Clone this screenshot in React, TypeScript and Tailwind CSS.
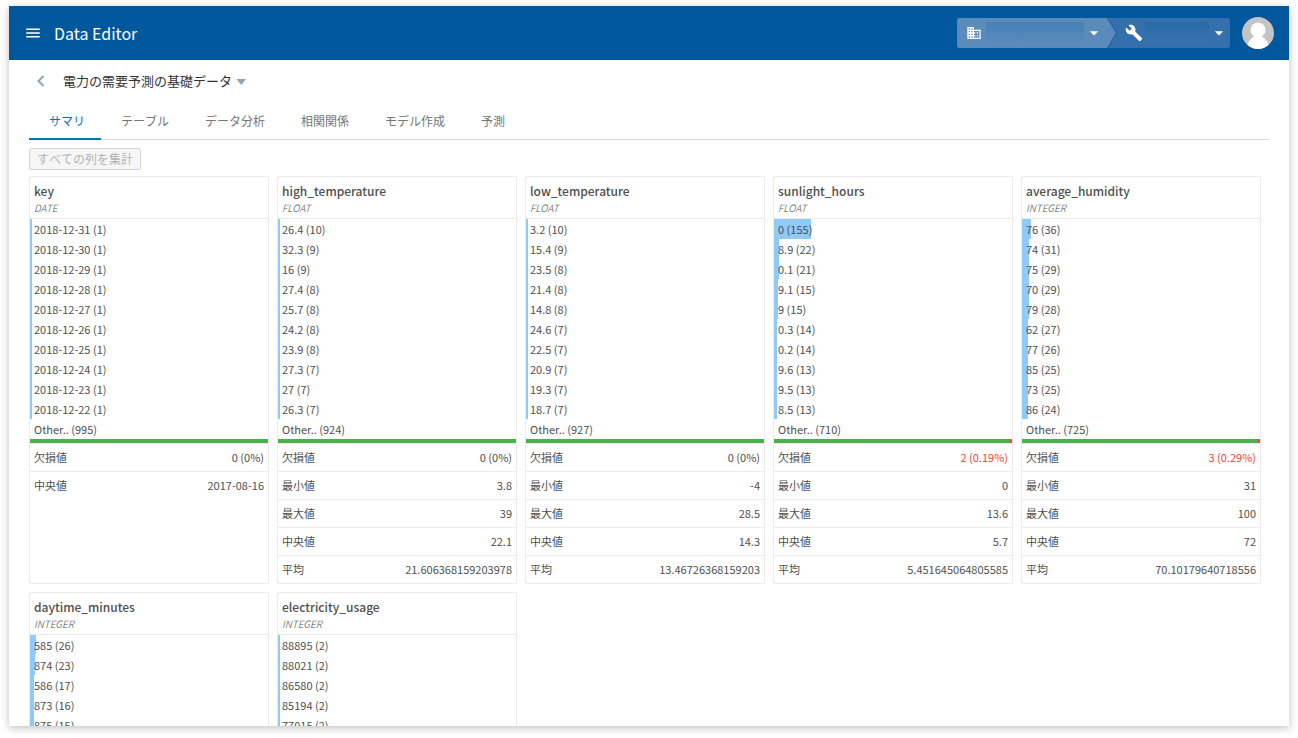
import { useState } from "react";
import { MdArrowDropDown, MdBuild, MdBusiness, MdMenu } from "react-icons/md";

type Column = {
  name: string;
  type: "DATE" | "FLOAT" | "INTEGER";
  values: [string, number][];
  summary?: {
    other: number;
    missing: number;
    missingRate: string;
    stats: [string, string][];
  };
};

const TABS = ["サマリ", "テーブル", "データ分析", "相関関係", "モデル作成", "予測"];

const TOTAL = 1005;

const COLUMNS: Column[] = [
  {
    name: "key",
    type: "DATE",
    values: [
      ["2018-12-31", 1],
      ["2018-12-30", 1],
      ["2018-12-29", 1],
      ["2018-12-28", 1],
      ["2018-12-27", 1],
      ["2018-12-26", 1],
      ["2018-12-25", 1],
      ["2018-12-24", 1],
      ["2018-12-23", 1],
      ["2018-12-22", 1],
    ],
    summary: {
      other: 995,
      missing: 0,
      missingRate: "0%",
      stats: [["中央値", "2017-08-16"]],
    },
  },
  {
    name: "high_temperature",
    type: "FLOAT",
    values: [
      ["26.4", 10],
      ["32.3", 9],
      ["16", 9],
      ["27.4", 8],
      ["25.7", 8],
      ["24.2", 8],
      ["23.9", 8],
      ["27.3", 7],
      ["27", 7],
      ["26.3", 7],
    ],
    summary: {
      other: 924,
      missing: 0,
      missingRate: "0%",
      stats: [
        ["最小値", "3.8"],
        ["最大値", "39"],
        ["中央値", "22.1"],
        ["平均", "21.606368159203978"],
      ],
    },
  },
  {
    name: "low_temperature",
    type: "FLOAT",
    values: [
      ["3.2", 10],
      ["15.4", 9],
      ["23.5", 8],
      ["21.4", 8],
      ["14.8", 8],
      ["24.6", 7],
      ["22.5", 7],
      ["20.9", 7],
      ["19.3", 7],
      ["18.7", 7],
    ],
    summary: {
      other: 927,
      missing: 0,
      missingRate: "0%",
      stats: [
        ["最小値", "-4"],
        ["最大値", "28.5"],
        ["中央値", "14.3"],
        ["平均", "13.46726368159203"],
      ],
    },
  },
  {
    name: "sunlight_hours",
    type: "FLOAT",
    values: [
      ["0", 155],
      ["8.9", 22],
      ["0.1", 21],
      ["9.1", 15],
      ["9", 15],
      ["0.3", 14],
      ["0.2", 14],
      ["9.6", 13],
      ["9.5", 13],
      ["8.5", 13],
    ],
    summary: {
      other: 710,
      missing: 2,
      missingRate: "0.19%",
      stats: [
        ["最小値", "0"],
        ["最大値", "13.6"],
        ["中央値", "5.7"],
        ["平均", "5.451645064805585"],
      ],
    },
  },
  {
    name: "average_humidity",
    type: "INTEGER",
    values: [
      ["76", 36],
      ["74", 31],
      ["75", 29],
      ["70", 29],
      ["79", 28],
      ["62", 27],
      ["77", 26],
      ["85", 25],
      ["73", 25],
      ["86", 24],
    ],
    summary: {
      other: 725,
      missing: 3,
      missingRate: "0.29%",
      stats: [
        ["最小値", "31"],
        ["最大値", "100"],
        ["中央値", "72"],
        ["平均", "70.10179640718556"],
      ],
    },
  },
  {
    name: "daytime_minutes",
    type: "INTEGER",
    values: [
      ["585", 26],
      ["874", 23],
      ["586", 17],
      ["873", 16],
      ["875", 15],
    ],
  },
  {
    name: "electricity_usage",
    type: "INTEGER",
    values: [
      ["88895", 2],
      ["88021", 2],
      ["86580", 2],
      ["85194", 2],
      ["77015", 2],
    ],
  },
];

function Header() {
  return (
    <header className="flex h-[54px] shrink-0 items-center bg-[#01579b] px-[15px] text-white">
      <button type="button" aria-label="menu">
        <MdMenu size={18} />
      </button>
      <h1 className="ml-3 text-base">Data Editor</h1>

      <div className="ml-auto flex h-[30px] overflow-hidden rounded-[3px] bg-[#3370ac]">
        <div className="flex drop-shadow-[1px_0_0_#1d5c9c]">
          <button
            type="button"
            aria-label="organization"
            className="flex w-[159px] items-center bg-[#5b8bba] pr-3 pl-[9px] [clip-path:polygon(0_0,150px_0,100%_50%,150px_100%,0_100%)]"
          >
            <MdBusiness size={16} />
            <span className="ml-1 h-[22px] flex-1 bg-linear-to-b from-[#4480b6] to-[#5c8cbb]" />
            <MdArrowDropDown size={20} />
          </button>
        </div>
        <button type="button" aria-label="project" className="flex w-[114px] items-center pr-px pl-[9px]">
          <MdBuild size={18} />
          <span className="ml-[2px] h-[22px] w-16 bg-linear-to-b from-[#2869a9] to-[#3974ae]" />
          <MdArrowDropDown size={20} className="ml-auto" />
        </button>
      </div>

      <button type="button" aria-label="account" className="ml-3">
        <svg width="32" height="32" viewBox="0 0 32 32">
          <clipPath id="avatar">
            <circle cx="16" cy="16" r="16" />
          </clipPath>
          <g clipPath="url(#avatar)">
            <rect width="32" height="32" fill="#c4c4c4" />
            <circle cx="16" cy="13" r="7.5" fill="#fff" />
            <path d="M5 32c0-6 3-10.500 7.500-12.500h7C24 21.500 27 26 27 32z" fill="#fff" />
          </g>
        </svg>
      </button>
    </header>
  );
}

function ColumnCard({ column }: { column: Column }) {
  const { name, type, values, summary } = column;

  return (
    <section className="w-60 rounded-xs border border-[#ebebeb] text-[11px] text-[#4f4f4f]">
      <div className="flex h-[42px] flex-col border-b border-[#ebebeb] px-1 pt-1">
        <h2 className="text-xs leading-5 font-medium">{name}</h2>
        <p className="text-[10px] leading-[14px] font-light italic">{type}</p>
      </div>

      <ul className="leading-5">
        {values.map(([value, count]) => (
          <li key={value} className="relative px-1">
            <span
              className="absolute inset-y-0 left-0 min-w-[2px] bg-[#90caf9]"
              style={{ width: `${(count / TOTAL) * 100}%` }}
            />
            <span className="relative">
              {value} ({count})
            </span>
          </li>
        ))}
        {summary && <li className="px-1">Other.. ({summary.other})</li>}
      </ul>

      {summary && (
        <>
          <div className="flex h-1 bg-[#4caf50]">
            {summary.missing > 0 && <span className="ml-auto w-[2px] bg-[#f44336]" />}
          </div>

          <dl className="leading-[27px]">
            <div className="flex justify-between border-t border-[#ebebeb] px-1">
              <dt>欠損値</dt>
              <dd className={summary.missing > 0 ? "text-[#f44336]" : ""}>
                {summary.missing} ({summary.missingRate})
              </dd>
            </div>
            {summary.stats.map(([label, value]) => (
              <div key={label} className="flex justify-between border-t border-[#ebebeb] px-1">
                <dt>{label}</dt>
                <dd>{value}</dd>
              </div>
            ))}
          </dl>
        </>
      )}
    </section>
  );
}

export default function App() {
  const [tab, setTab] = useState(TABS[0]);

  return (
    <div lang="ja" className="h-screen bg-white px-[9px] pt-[6px] pb-3 font-['Noto_Sans_CJK_JP',sans-serif]">
      <div className="flex h-full flex-col overflow-hidden bg-white shadow-[0_2px_8px_rgba(0,0,0,0.25)]">
        <Header />

        <main className="min-h-0 flex-1 overflow-y-auto px-5 [scrollbar-width:none]">
          <div className="flex h-[42px] items-center">
            <button type="button" aria-label="back" className="px-2">
              <svg width="8" height="12" viewBox="0 0 8 12" fill="none" stroke="#90a4ae" strokeWidth="2">
                <path d="M6.500 1L1.500 6l5 5" />
              </svg>
            </button>
            <button type="button" className="ml-[10px] flex items-center gap-1 text-[13px] text-[#333]">
              電力の需要予測の基礎データ
              <svg width="10" height="8" viewBox="0 0 10 8" fill="#90a4ae">
                <path d="M0.500 2h9.500L5.250 8z" />
              </svg>
            </button>
          </div>

          <nav className="flex h-[38px] border-b border-[#d9d9d9] text-xs [font-kerning:none]">
            {TABS.map((name) => (
              <button
                key={name}
                type="button"
                onClick={() => setTab(name)}
                className={
                  name === tab
                    ? "-mb-px border-b-2 border-[#0277bd] pt-[2px] pr-4 pl-5 text-[#0277bd]"
                    : "-mb-px border-b-2 border-transparent pt-[2px] pr-4 pl-5 text-[#757575]"
                }
              >
                {name}
              </button>
            ))}
          </nav>

          <div className="pt-2 pb-[6px]">
            <button
              type="button"
              disabled
              className="block h-[22px] rounded-xs border border-[#d4d4d4] bg-[#f6f6f6] px-[7px] text-xs leading-5 text-[#b3b3b3] [font-kerning:none]"
            >
              すべての列を集計
            </button>
          </div>

          <div className="flex flex-wrap gap-2">
            {COLUMNS.map((column) => (
              <ColumnCard key={column.name} column={column} />
            ))}
          </div>
        </main>
      </div>
    </div>
  );
}
